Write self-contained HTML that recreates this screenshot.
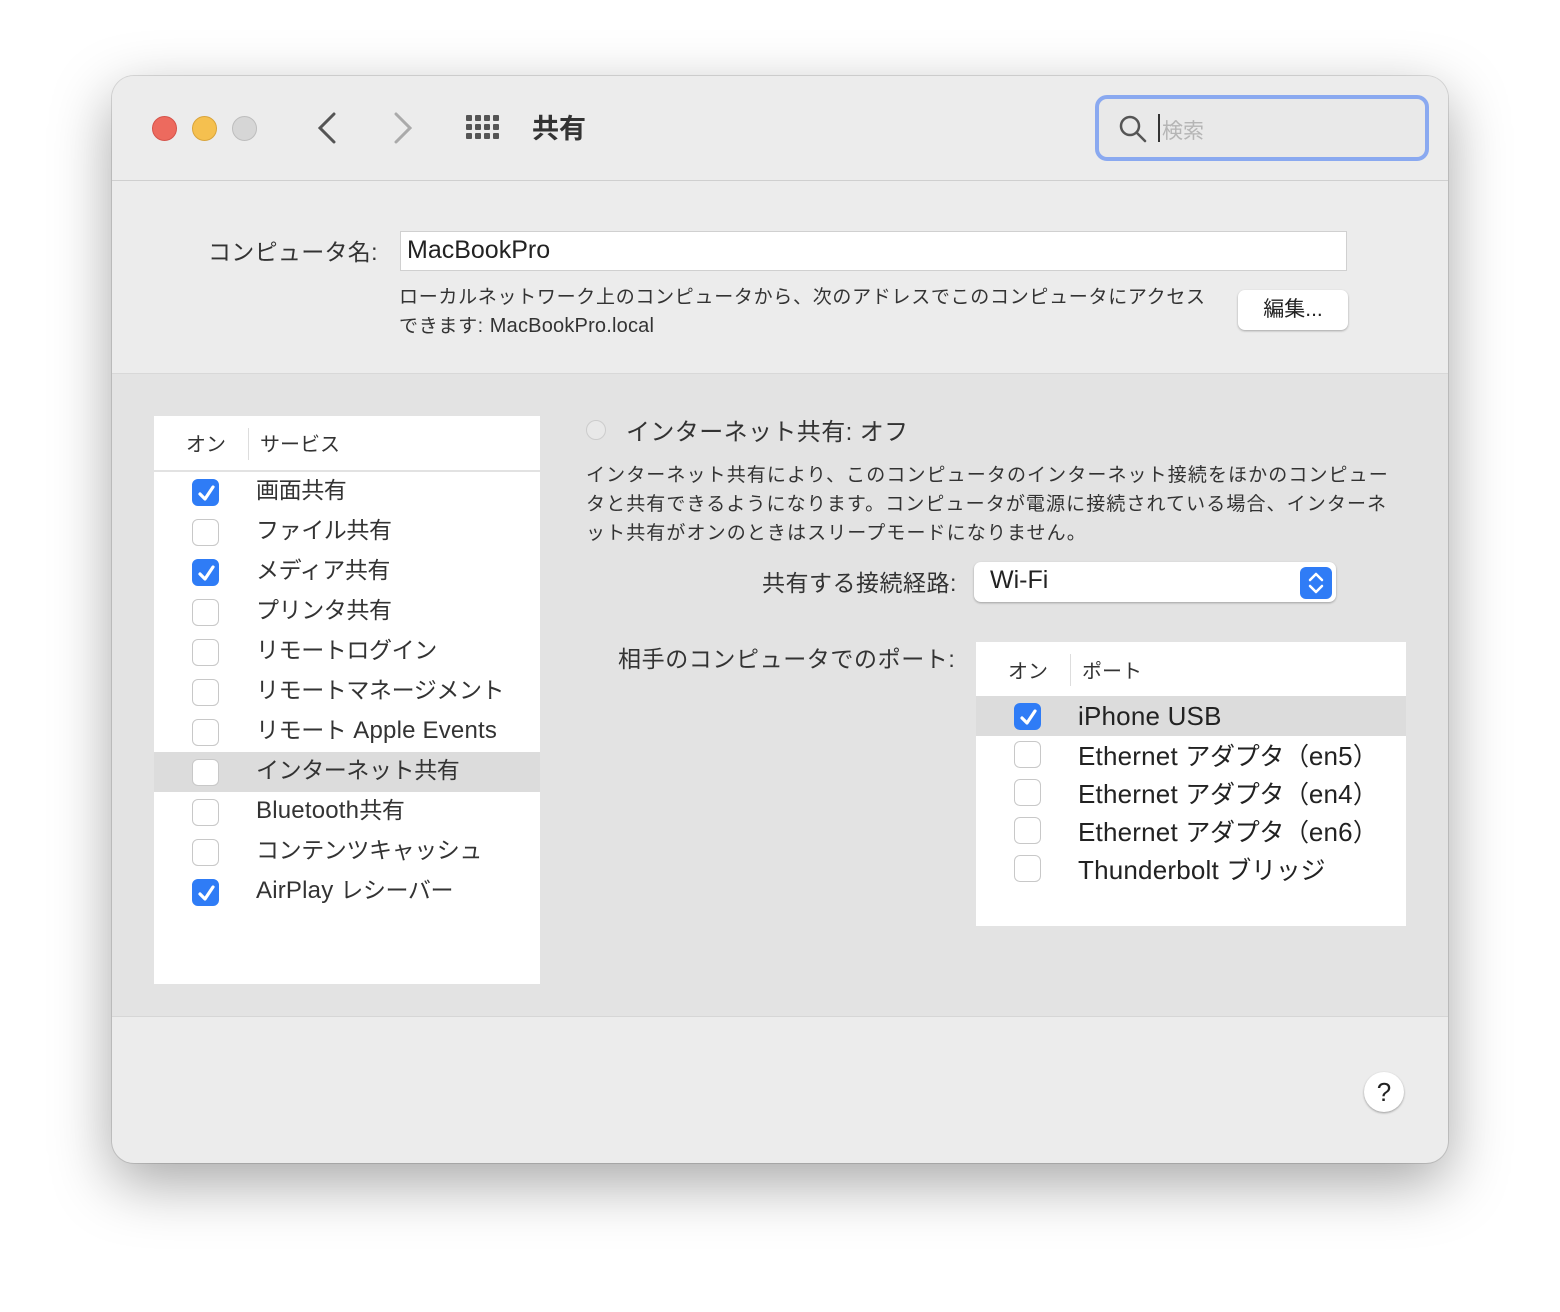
<!DOCTYPE html>
<html><head><meta charset="utf-8"><style>
*{margin:0;padding:0;box-sizing:border-box}
body{width:1560px;height:1312px;background:#fff;font-family:"Liberation Sans","Noto Sans CJK JP",sans-serif;color:#222;position:relative;overflow:hidden}
.a{position:absolute}
.win{left:112px;top:76px;width:1336px;height:1087px;border-radius:22px;background:#ececec;box-shadow:0 20px 60px rgba(0,0,0,.35),0 0 0 1px rgba(0,0,0,.12);overflow:hidden}
.t{white-space:nowrap}
.cb{width:27px;height:27px;border-radius:6px;background:#fff;border:1px solid #c8c8c8}
.cb.on{background:#2f7cf6;border-color:#2f7cf6}
.cb.on svg{position:absolute;left:3px;top:3px}
</style></head><body>
<div class="a win">
 <div class="a" style="left:0;top:0;width:1336px;height:105px;background:#ececec;border-bottom:1px solid #cfcfcf"></div>
 <div class="a" style="left:40px;top:40px;width:25px;height:25px;border-radius:50%;background:#ed6a5e;border:1px solid #d5534a"></div>
 <div class="a" style="left:80px;top:40px;width:25px;height:25px;border-radius:50%;background:#f5c04f;border:1px solid #d9a43a"></div>
 <div class="a" style="left:120px;top:40px;width:25px;height:25px;border-radius:50%;background:#d6d6d6;border:1px solid #bdbdbd"></div>
 <svg class="a" style="left:200px;top:34px" width="30" height="36"><path d="M22 4 L8 18 L22 32" stroke="#555" stroke-width="3" fill="none" stroke-linecap="round"/></svg>
 <svg class="a" style="left:276px;top:34px" width="30" height="36"><path d="M8 4 L22 18 L8 32" stroke="#aaa" stroke-width="3" fill="none" stroke-linecap="round"/></svg>
 <svg class="a" style="left:352px;top:38px" width="38" height="28" fill="#555">
  <rect x="2" y="1" width="6" height="6" rx="1"/><rect x="11" y="1" width="6" height="6" rx="1"/><rect x="20" y="1" width="6" height="6" rx="1"/><rect x="29" y="1" width="6" height="6" rx="1"/>
  <rect x="2" y="10" width="6" height="6" rx="1"/><rect x="11" y="10" width="6" height="6" rx="1"/><rect x="20" y="10" width="6" height="6" rx="1"/><rect x="29" y="10" width="6" height="6" rx="1"/>
  <rect x="2" y="19" width="6" height="6" rx="1"/><rect x="11" y="19" width="6" height="6" rx="1"/><rect x="20" y="19" width="6" height="6" rx="1"/><rect x="29" y="19" width="6" height="6" rx="1"/></svg>
 <div class="a t" style="left:420px;top:31px;font-size:27px;font-weight:bold;color:#333">共有</div>
 <div class="a" style="left:983px;top:19px;width:334px;height:66px;border:4px solid #8aa9f0;border-radius:12px;background:#e9e9e9"></div>
 <svg class="a" style="left:1006px;top:38px" width="30" height="30"><circle cx="12" cy="12" r="9" stroke="#555" stroke-width="2.5" fill="none"/><path d="M19 19 L27 27" stroke="#555" stroke-width="2.5" stroke-linecap="round"/></svg>
 <div class="a" style="left:1046px;top:38px;width:2px;height:28px;background:#333"></div>
 <div class="a t" style="left:1050px;top:39px;font-size:21px;color:#b5b5b5">検索</div>

 <div class="a t" style="left:96px;top:157px;font-size:23px;color:#333;letter-spacing:0.3px">コンピュータ名:</div>
 <div class="a" style="left:288px;top:155px;width:947px;height:40px;background:#fff;border:1px solid #d0d0d0"></div>
 <div class="a t" style="left:295px;top:160px;font-size:25px;color:#222">MacBookPro</div>
 <div class="a" style="left:287px;top:207px;width:818px;font-size:19px;line-height:29px;color:#333;letter-spacing:0.7px">ローカルネットワーク上のコンピュータから、次のアドレスでこのコンピュータにアクセスできます: <span style="font-size:20px;letter-spacing:0.2px">MacBookPro.local</span></div>
 <div class="a" style="left:1126px;top:214px;width:110px;height:40px;background:#fff;border-radius:7px;box-shadow:0 1px 2px rgba(0,0,0,.3);font-size:21px;text-align:center;line-height:40px;color:#222">編集...</div>

 <div class="a" style="left:0;top:297px;width:1336px;height:644px;background:#e3e3e3;border-top:1px solid #d8d8d8;border-bottom:1px solid #d6d6d6"></div>
 <div class="a" style="left:42px;top:340px;width:386px;height:568px;background:#fff"></div>
 <div class="a" style="left:42px;top:394px;width:386px;height:2px;background:#e2e2e2"></div>
 <div class="a t" style="left:74px;top:352px;font-size:20px;color:#333">オン</div>
 <div class="a" style="left:136px;top:352px;width:1px;height:32px;background:#ddd"></div>
 <div class="a t" style="left:148px;top:352px;font-size:20px;color:#333">サービス</div>
 <div class="a" style="left:42px;top:676px;width:386px;height:40px;background:#dcdcdc"></div>

 <div class="a" style="left:864px;top:566px;width:430px;height:284px;background:#fff"></div>
 <div class="a" style="left:864px;top:620px;width:430px;height:40px;background:#dcdcdc"></div>
 <div class="a t" style="left:896px;top:579px;font-size:20px;color:#333">オン</div>
 <div class="a" style="left:958px;top:578px;width:1px;height:32px;background:#ddd"></div>
 <div class="a t" style="left:970px;top:579px;font-size:20px;color:#333">ポート</div>

 <div class="a" style="left:474px;top:344px;width:20px;height:20px;border-radius:50%;border:1px solid #ccc;background:#e8e8e8"></div>
 <div class="a t" style="left:514px;top:336px;font-size:24px;color:#333;letter-spacing:0.4px">インターネット共有: オフ</div>
 <div class="a" style="left:474px;top:385px;width:820px;font-size:19px;line-height:29px;color:#333;letter-spacing:1.1px">インターネット共有により、このコンピュータのインターネット接続をほかのコンピュータと共有できるようになります。コンピュータが電源に接続されている場合、インターネット共有がオンのときはスリープモードになりません。</div>
 <div class="a t" style="left:650px;top:488px;font-size:23px;color:#333;letter-spacing:0.5px">共有する接続経路:</div>
 <div class="a" style="left:862px;top:486px;width:362px;height:40px;background:#fff;border-radius:7px;box-shadow:0 1px 2px rgba(0,0,0,.3)"></div>
 <div class="a t" style="left:878px;top:490px;font-size:25px;color:#222">Wi-Fi</div>
 <div class="a" style="left:1188px;top:491px;width:32px;height:32px;border-radius:6px;background:#2f7cf6"></div>
 <svg class="a" style="left:1188px;top:491px" width="32" height="32"><path d="M10 13 L16 7 L22 13 M10 19 L16 25 L22 19" stroke="#fff" stroke-width="2.5" fill="none" stroke-linecap="round" stroke-linejoin="round"/></svg>
 <div class="a t" style="left:506px;top:564px;font-size:23px;color:#333;letter-spacing:0.6px">相手のコンピュータでのポート:</div>

 <div id="L"></div>
</div>
<div class="a" style="left:1364px;top:1072px;width:40px;height:40px;border-radius:50%;background:#fff;box-shadow:0 1px 2px rgba(0,0,0,.35);text-align:center;font-size:26px;line-height:40px;color:#222">?</div>
<script>
var ck='<svg width="21" height="21"><path d="M4 11 L9 16 L17 4" stroke="#fff" stroke-width="3.2" fill="none" stroke-linecap="round" stroke-linejoin="round"/></svg>';
var s=[["画面共有",1],["ファイル共有",0],["メディア共有",1],["プリンタ共有",0],["リモートログイン",0],["リモートマネージメント",0],["リモート Apple Events",0],["インターネット共有",0],["Bluetooth共有",0],["コンテンツキャッシュ",0],["AirPlay レシーバー",1]];
var h='';
s.forEach(function(r,i){var y=402+i*40;h+='<div class="a cb'+(r[1]?' on':'')+'" style="left:80px;top:'+(y+1)+'px">'+(r[1]?ck:'')+'</div><div class="a t" style="left:144px;top:'+(y-7)+'px;font-size:23px;color:#333;letter-spacing:-0.4px">'+r[0].replace(/([A-Za-z ]+)/g,'<span style="font-size:24px;letter-spacing:0.2px">$1</span>')+'</div>';});
var p=[["iPhone USB",1],["Ethernet アダプタ（en5）",0],["Ethernet アダプタ（en4）",0],["Ethernet アダプタ（en6）",0],["Thunderbolt ブリッジ",0]];
p.forEach(function(r,i){var y=627+i*38;h+='<div class="a cb'+(r[1]?' on':'')+'" style="left:902px;top:'+y+'px">'+(r[1]?ck:'')+'</div><div class="a t" style="left:966px;top:'+(y-4+(i==0?2:0))+'px;font-size:25px;color:#222;letter-spacing:-0.3px">'+r[0].replace(/([A-Za-z]+ USB|Ethernet |Thunderbolt |en\d)/g,'<span style="font-size:26px;letter-spacing:0.2px">$1</span>')+'</div>';});
document.getElementById('L').innerHTML=h;
</script>
</body></html>
